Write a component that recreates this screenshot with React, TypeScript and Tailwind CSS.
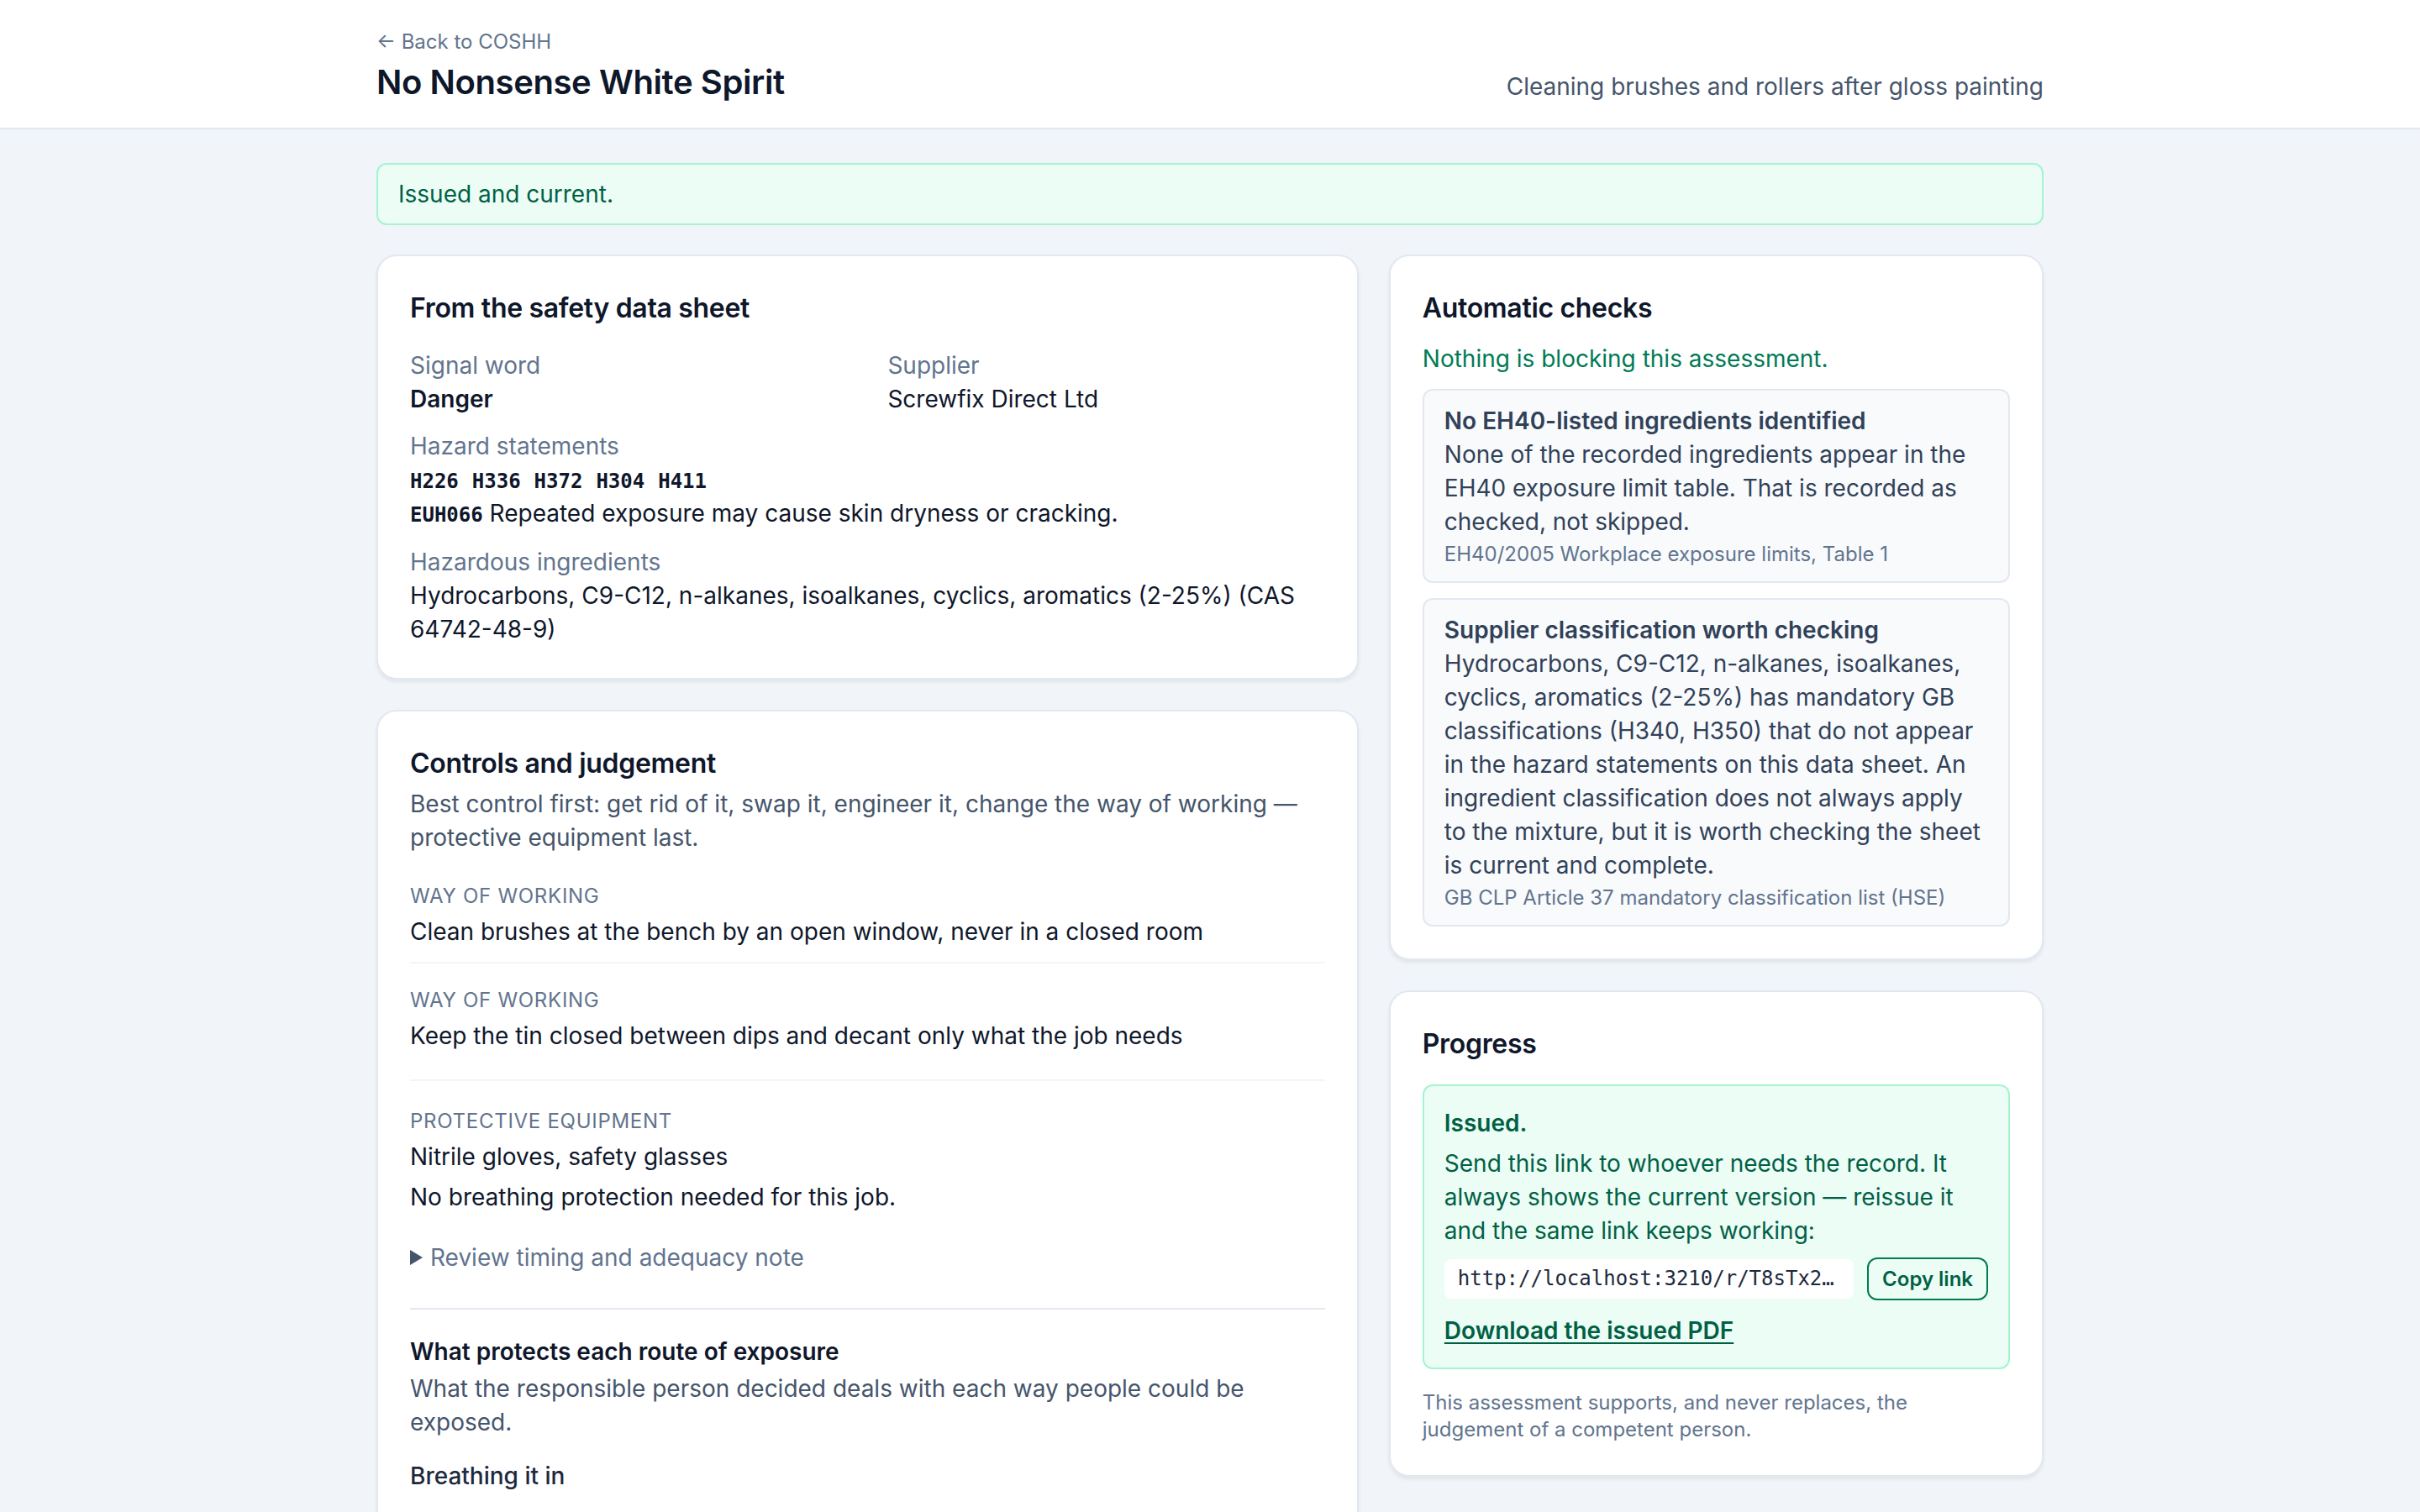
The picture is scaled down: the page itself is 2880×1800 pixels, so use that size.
import React from 'react';

const mono = "font-['DejaVu_Sans_Mono','Liberation_Mono',monospace]";

const Card: React.FC<{ title: string; children: React.ReactNode }> = ({ title, children }) => (
  <section className="bg-white rounded-3xl border-2 border-slate-200 shadow-[0_3px_4px_rgba(15,23,42,0.07)] p-[38px]">
    <h2 className="text-[32px] leading-[48px] font-semibold tracking-[-0.01em] text-slate-900">{title}</h2>
    {children}
  </section>
);

const Field: React.FC<{ label: string; children: React.ReactNode }> = ({ label, children }) => (
  <div>
    <div className="text-slate-500">{label}</div>
    {children}
  </div>
);

const CheckBox: React.FC<{ title: string; body: string; source: string }> = ({ title, body, source }) => (
  <div className="rounded-xl border-2 border-slate-200 bg-slate-50 px-6 py-4 text-slate-700">
    <div className="font-semibold">{title}</div>
    <p>{body}</p>
    <div className="mt-[3px] text-[24px] leading-[32px] text-slate-500">{source}</div>
  </div>
);

export default function App() {
  const codes = ['H226', 'H336', 'H372', 'H304', 'H411'];

  return (
    <div className="min-h-screen bg-slate-100 font-['Inter','Noto_Sans',sans-serif] text-[28px] leading-[40px] text-slate-900">
      <header className="bg-white border-b-2 border-slate-200">
        <div className="mx-auto w-[1984px] pt-[34px] pb-[26px] flex items-end justify-between">
          <div>
            <a className="block text-[24px] leading-[32px] text-slate-500">← Back to COSHH</a>
            <h1 className="mt-1 text-[40px] leading-[56px] font-semibold tracking-[-0.01em] text-slate-900">
              No Nonsense White Spirit
            </h1>
          </div>
          <p className="pb-[3px] text-slate-600">Cleaning brushes and rollers after gloss painting</p>
        </div>
      </header>

      <main className="mx-auto w-[1984px] pt-[40px] pb-10">
        <div className="mb-[35px] rounded-xl border-2 border-emerald-200 bg-emerald-50 px-6 py-[15px] text-emerald-800">
          Issued and current.
        </div>

        <div className="grid grid-cols-[minmax(0,3fr)_minmax(0,2fr)] gap-9 items-start">
          <div className="flex flex-col gap-9">
            <Card title="From the safety data sheet">
              <div className="mt-6 flex flex-col gap-4">
                <div className="grid grid-cols-2 gap-x-12">
                  <Field label="Signal word">
                    <div className="font-semibold">Danger</div>
                  </Field>
                  <Field label="Supplier">
                    <div>Screwfix Direct Ltd</div>
                  </Field>
                </div>
                <Field label="Hazard statements">
                  <div className={`${mono} mt-1.5 flex gap-4 text-[24px] leading-[32px] font-bold`}>
                    {codes.map((c) => (
                      <span key={c}>{c}</span>
                    ))}
                  </div>
                  <div className="mt-0.5">
                    <span className={`${mono} text-[24px] font-bold`}>EUH066</span> Repeated exposure may cause skin dryness or cracking.
                  </div>
                </Field>
                <Field label="Hazardous ingredients">
                  <div>Hydrocarbons, C9-C12, n-alkanes, isoalkanes, cyclics, aromatics (2-25%) (CAS 64742-48-9)</div>
                </Field>
              </div>
            </Card>

            <Card title="Controls and judgement">
              <p className="mt-1 text-slate-600">
                Best control first: get rid of it, swap it, engineer it, change the way of working — protective equipment last.
              </p>

              <div className="mt-[34px]">
                <div className="pb-4 border-b-2 border-slate-100">
                  <div className="text-[24px] leading-[32px] uppercase tracking-[0.03em] text-slate-500">Way of working</div>
                  <div className="mt-1.5">Clean brushes at the bench by an open window, never in a closed room</div>
                </div>
                <div className="pt-7 pb-8 border-b-2 border-slate-100">
                  <div className="text-[24px] leading-[32px] uppercase tracking-[0.03em] text-slate-500">Way of working</div>
                  <div className="mt-1.5">Keep the tin closed between dips and decant only what the job needs</div>
                </div>
                <div className="pt-8">
                  <div className="text-[24px] leading-[32px] uppercase tracking-[0.03em] text-slate-500">Protective equipment</div>
                  <div className="mt-1.5">Nitrile gloves, safety glasses</div>
                  <div className="mt-2">No breathing protection needed for this job.</div>
                  <details className="mt-8">
                    <summary className="flex items-center gap-[9px] cursor-pointer text-slate-500">
                      <svg width="15" height="18" viewBox="0 0 15 18" className="text-slate-600">
                        <path d="M0 0 L15 9 L0 18 Z" fill="currentColor" />
                      </svg>
                      Review timing and adequacy note
                    </summary>
                  </details>
                </div>
              </div>

              <div className="mt-[40px] pt-[30px] border-t-2 border-slate-200">
                <h3 className="font-semibold">What protects each route of exposure</h3>
                <p className="mt-1 text-slate-600">
                  What the responsible person decided deals with each way people could be exposed.
                </p>
                <div className="mt-6 font-medium text-slate-800">Breathing it in</div>
                <p className="mt-5 text-slate-600">
                  Covered by: Clean brushes at the bench by an open window, never in a closed room
                </p>
              </div>
            </Card>
          </div>

          <div className="flex flex-col gap-9">
            <Card title="Automatic checks">
              <p className="mt-4 text-emerald-700">Nothing is blocking this assessment.</p>
              <div className="mt-4 flex flex-col gap-[18px]">
                <CheckBox
                  title="No EH40-listed ingredients identified"
                  body="None of the recorded ingredients appear in the EH40 exposure limit table. That is recorded as checked, not skipped."
                  source="EH40/2005 Workplace exposure limits, Table 1"
                />
                <CheckBox
                  title="Supplier classification worth checking"
                  body="Hydrocarbons, C9-C12, n-alkanes, isoalkanes, cyclics, aromatics (2-25%) has mandatory GB classifications (H340, H350) that do not appear in the hazard statements on this data sheet. An ingredient classification does not always apply to the mixture, but it is worth checking the sheet is current and complete."
                  source="GB CLP Article 37 mandatory classification list (HSE)"
                />
              </div>
            </Card>

            <Card title="Progress">
              <div className="mt-6 rounded-xl border-2 border-emerald-200 bg-emerald-50 p-6 text-emerald-800">
                <div className="font-semibold">Issued.</div>
                <p className="mt-2">
                  Send this link to whoever needs the record. It always shows the current version — reissue it and the same link keeps working:
                </p>
                <div className="mt-3 flex items-center gap-4">
                  <div className={`${mono} flex-1 min-w-0 h-[47px] truncate rounded-lg bg-white px-4 text-[24px] leading-[47px] text-slate-800`}>
                    http://localhost:3210/r/T8sTx2kQ9vLmR4pZ
                  </div>
                  <button className="h-[51px] shrink-0 rounded-xl border-2 border-emerald-700 px-4 text-[24px] font-semibold text-emerald-800">
                    Copy link
                  </button>
                </div>
                <a className="mt-4 inline-block font-semibold underline decoration-2 underline-offset-4">
                  Download the issued PDF
                </a>
              </div>
              <p className="mt-6 text-[24px] leading-[32px] text-slate-500">
                This assessment supports, and never replaces, the judgement of a competent person.
              </p>
            </Card>
          </div>
        </div>
      </main>
    </div>
  );
}
